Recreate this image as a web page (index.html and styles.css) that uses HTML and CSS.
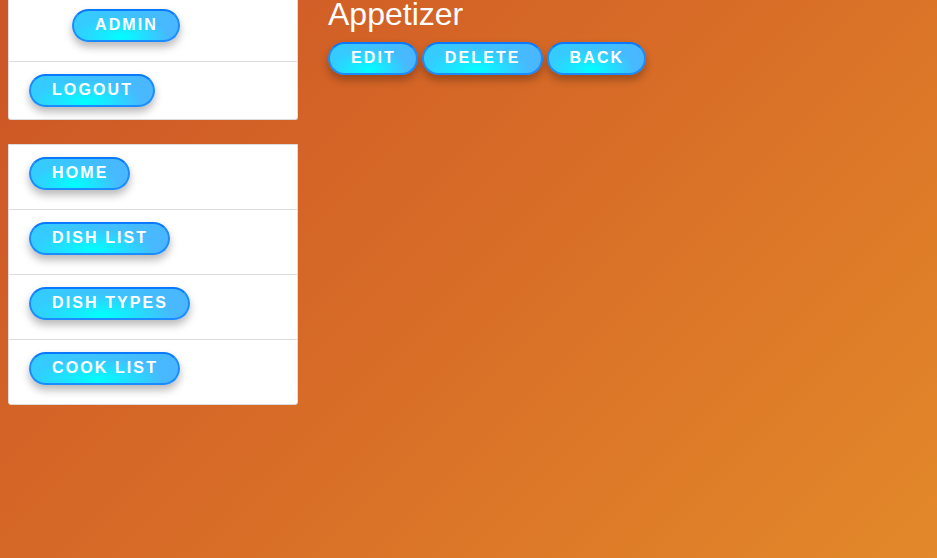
FILE: index.html
```html
<!DOCTYPE html>
<html>
<head>
<meta charset="utf-8">
<link rel="stylesheet" href="styles.css">
</head>
<body>
<div class="layout">
  <aside class="sidebar">
    <div class="panel panel-top">
      <div class="row row-admin"><a class="btn">ADMIN</a></div>
      <div class="row row-logout"><a class="btn">LOGOUT</a></div>
    </div>
    <div class="panel panel-nav">
      <div class="row"><a class="btn">HOME</a></div>
      <div class="row"><a class="btn">DISH LIST</a></div>
      <div class="row"><a class="btn">DISH TYPES</a></div>
      <div class="row"><a class="btn">COOK LIST</a></div>
    </div>
  </aside>
  <main class="content">
    <h1 class="title">Appetizer</h1>
    <div class="actions">
      <a class="btn">EDIT</a>
      <a class="btn">DELETE</a>
      <a class="btn">BACK</a>
    </div>
  </main>
</div>
</body>
</html>
```

FILE: styles.css
```css
html, body {
  margin: 0;
  padding: 0;
  height: 100%;
}
body {
  background: linear-gradient(135deg, #cc5526 0%, #d86d27 50%, #e3892a 100%);
  font-family: "Liberation Sans", Arial, sans-serif;
  overflow: hidden;
}
.layout {
  display: flex;
  padding: 0 8px;
  gap: 30px;
}
.sidebar {
  width: 290px;
  display: flex;
  flex-direction: column;
  gap: 24px;
}
.panel {
  background: #fff;
  border: 1px solid #dcdcdc;
  border-radius: 0 0 3px 3px;
}
.panel-top {
  border-top: none;
}
.row {
  box-sizing: border-box;
  padding: 12px 20px 0;
  border-top: 1px solid #dddddd;
}
.row:first-child {
  border-top: none;
}
.panel-nav .row {
  height: 65px;
}
.panel-nav .row:first-child {
  height: 64px;
}
.row-admin {
  height: 61px;
  padding: 9px 20px 0 63px;
}
.row-logout {
  height: 58px;
}
.btn {
  display: inline-block;
  box-sizing: border-box;
  height: 33px;
  padding: 0 20px 1px 21px;
  line-height: 28px;
  border: 2px solid #1a8cff;
  border-top-color: #0a78ff;
  border-radius: 17px;
  color: #fff;
  font-weight: bold;
  font-size: 16px;
  letter-spacing: 2.1px;
  background:
    radial-gradient(ellipse 45% 75% at 45% 90%, rgba(0,255,255,1) 0%, rgba(0,255,255,0) 100%),
    linear-gradient(to right, #33cdff, #4ab6ff);
  box-shadow: 0 5px 9px rgba(0,0,0,0.28);
  white-space: nowrap;
}
.content {
  padding-top: 0;
}
.title {
  margin: -4px 0 0;
  font-weight: normal;
  font-size: 32px;
  line-height: 37px;
  color: #fff;
}
.actions {
  display: flex;
  gap: 4px;
  margin-top: 9px;
}
```
